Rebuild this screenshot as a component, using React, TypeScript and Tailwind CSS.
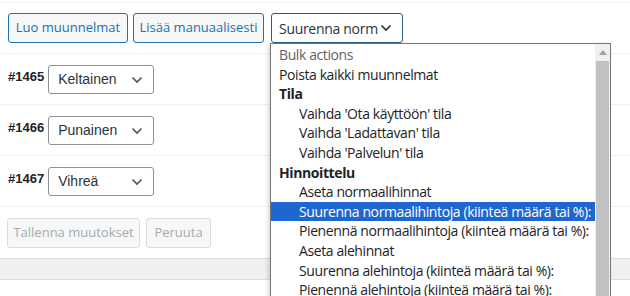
import React from 'react';

const menuFont = { fontFamily: '"Open Sans", "Noto Sans", sans-serif' };
const rowFont = { fontFamily: '"Liberation Sans", Arial, sans-serif' };

const Chevron = ({ className = '' }: { className?: string }) => (
  <svg width="12" height="8" viewBox="0 0 12 8" className={className}>
    <path d="M1.5 1.5 L6 6 L10.5 1.5" fill="none" stroke="currentColor" strokeWidth="1.7" />
  </svg>
);

const variations = [
  { id: '#1465', value: 'Keltainen' },
  { id: '#1466', value: 'Punainen' },
  { id: '#1467', value: 'Vihreä' },
];

type Opt = { label: string; kind: 'plain' | 'group' | 'item' | 'muted'; active?: boolean };

const options: Opt[] = [
  { label: 'Bulk actions', kind: 'muted' },
  { label: 'Poista kaikki muunnelmat', kind: 'plain' },
  { label: 'Tila', kind: 'group' },
  { label: "Vaihda 'Ota käyttöön' tila", kind: 'item' },
  { label: "Vaihda 'Ladattavan' tila", kind: 'item' },
  { label: "Vaihda 'Palvelun' tila", kind: 'item' },
  { label: 'Hinnoittelu', kind: 'group' },
  { label: 'Aseta normaalihinnat', kind: 'item' },
  { label: 'Suurenna normaalihintoja (kiinteä määrä tai %):', kind: 'item', active: true },
  { label: 'Pienennä normaalihintoja (kiinteä määrä tai %):', kind: 'item' },
  { label: 'Aseta alehinnat', kind: 'item' },
  { label: 'Suurenna alehintoja (kiinteä määrä tai %):', kind: 'item' },
  { label: 'Pienennä alehintoja (kiinteä määrä tai %):', kind: 'item' },
];

export default function App() {
  return (
    <div className="relative w-[630px] h-[296px] overflow-hidden bg-white">
      <div className="border-t border-[#f0f0f1] mt-[2px]" />
      {/* toolbar */}
      <div className="flex items-center gap-[5px] px-[8px] pt-[10px] pb-[10px] border-b border-[#f0f0f1]" style={menuFont}>
        <button className="h-[30px] w-[120px] rounded-[3px] border border-[#2271b1] bg-[#f6f7f7] text-[13px] text-[#2271b1]">
          Luo muunnelmat
        </button>
        <button className="h-[30px] w-[131px] rounded-[3px] border border-[#2271b1] bg-[#f6f7f7] text-[13px] text-[#2271b1]">
          Lisää manuaalisesti
        </button>
        <div className="ml-[2px] h-[30px] w-[132px] rounded-[3px] border border-[#2a5d84] bg-white flex items-center pl-[7px] pr-[10px] text-[14px] tracking-[-0.3px] text-[#2c3338]">
          <span className="overflow-hidden whitespace-nowrap w-[100px]">Suurenna norm</span>
          <Chevron className="ml-auto text-[#2c3338]" />
        </div>
      </div>

      {/* variation rows */}
      {variations.map((v) => (
        <div key={v.id} className="h-[51px] flex items-center gap-[4px] px-[8px] border-b border-[#f0f0f1]" style={rowFont}>
          <span className="text-[13px] font-bold text-[#1d2327] -mt-[4px]">{v.id}</span>
          <div className="h-[29px] w-[106px] rounded-[3px] border border-[#8c8f94] flex items-center pl-[9px] pr-[10px] text-[14px] text-[#2c3338] mt-[1px]">
            <span>{v.value}</span>
            <Chevron className="ml-auto text-[#50575e]" />
          </div>
        </div>
      ))}

      {/* save / cancel */}
      <div className="flex items-center gap-[6px] px-[7px] h-[51px]" style={menuFont}>
        <button className="h-[30px] w-[133px] rounded-[3px] border border-[#dcdcde] bg-[#f6f7f7] text-[13px] text-[#a7aaad]">
          Tallenna muutokset
        </button>
        <button className="h-[30px] w-[65px] rounded-[3px] border border-[#dcdcde] bg-[#f6f7f7] text-[13px] text-[#a7aaad]">
          Peruuta
        </button>
      </div>
      <div className="h-[22px] bg-[#f0f0f1] border-y border-[#dcdcde]" />

      {/* open dropdown list */}
      <div
        className="absolute left-[270px] top-[43px] w-[341px] h-[270px] bg-white border border-[#767676] shadow-[-2px_2px_4px_rgba(0,0,0,0.15)] flex"
        style={menuFont}
      >
        <ul className="flex-1 pt-[1px]">
          {options.map((o) => (
            <li
              key={o.label}
              className={`h-[19.6px] leading-[19.6px] text-[14px] tracking-[-0.4px] whitespace-nowrap overflow-hidden ${
                o.kind === 'item' ? 'pl-[28px]' : 'pl-[8px]'
              } ${o.active ? 'bg-[#1f67d0] text-white' : o.kind === 'muted' ? 'text-[#5f6368]' : 'text-[#1d2327]'} ${
                o.kind === 'group' ? 'font-bold' : ''
              }`}
            >
              {o.label}
            </li>
          ))}
        </ul>
        <div className="w-[15px] bg-[#f0f0f0] flex flex-col items-center">
          <div className="h-[17px] flex items-center justify-center">
            <svg width="8" height="5" viewBox="0 0 8 5">
              <path d="M0 5 L4 0 L8 5 Z" fill="#a3a3a3" />
            </svg>
          </div>
          <div className="w-[13px] flex-1 bg-[#c1c1c1]" />
        </div>
      </div>
    </div>
  );
}
